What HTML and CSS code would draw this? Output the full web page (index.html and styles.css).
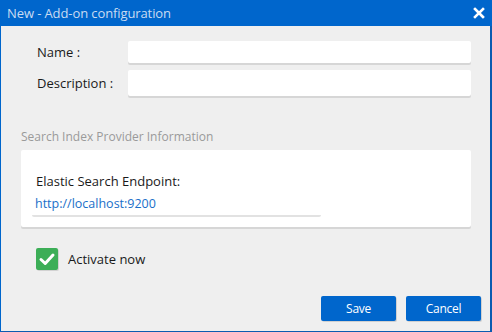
FILE: index.html
```html
<!DOCTYPE html>
<html>
<head>
<meta charset="utf-8">
<link rel="stylesheet" href="styles.css">
</head>
<body>
<div class="dialog">
  <div class="titlebar">
    <span class="title">New - Add-on configuration</span>
    <svg class="close" width="12" height="12" viewBox="0 0 12 12"><path d="M2 2 L10 10 M10 2 L2 10" stroke="#fff" stroke-width="2.6" stroke-linecap="square"/></svg>
  </div>
  <div class="content">
    <div class="form">
      <label class="lbl">Name :</label>
      <div class="field f-name"></div>
      <label class="lbl">Description :</label>
      <div class="field f-desc"></div>
    </div>
    <div class="section-title">Search Index Provider Information</div>
    <div class="card">
      <div class="card-label">Elastic Search Endpoint:</div>
      <div class="url-field">http://localhost:9200</div>
    </div>
    <div class="check-row">
      <span class="checkbox"><svg width="22" height="22" viewBox="0 0 22 22"><path d="M5 11.5 L9.2 15.5 L17 7" fill="none" stroke="#fff" stroke-width="3" stroke-linecap="round" stroke-linejoin="round"/></svg></span>
      <span class="check-label">Activate now</span>
    </div>
    <div class="buttons">
      <button class="btn">Save</button>
      <button class="btn">Cancel</button>
    </div>
  </div>
</div>
</body>
</html>
```

FILE: styles.css
```css
html, body {
  margin: 0;
  padding: 0;
}
body {
  font-family: "Open Sans", "Noto Sans", sans-serif;
  background: #efefef;
}
.dialog {
  width: 492px;
  height: 332px;
  box-sizing: border-box;
  display: flex;
  flex-direction: column;
  border-left: 1px solid #0066cc;
  border-right: 2px solid #0b5bb0;
  border-bottom: 1px solid #0b5bb0;
  background: #efefef;
}
.titlebar {
  height: 26px;
  margin-left: -1px;
  margin-right: -2px;
  background: #0066cc;
  display: flex;
  align-items: center;
  justify-content: space-between;
  padding: 0 7px 0 7px;
  flex-shrink: 0;
}
.title {
  color: #c9dcf2;
  font-size: 13px;
  letter-spacing: -0.1px;
}
.close {
  display: block;
}
.content {
  flex: 1;
  display: flex;
  flex-direction: column;
  padding: 15px 19px 0 20px;
}
.form {
  display: grid;
  grid-template-columns: 91px 1fr;
  row-gap: 7px;
  padding-left: 16px;
  align-items: center;
}
.lbl {
  font-size: 13px;
  color: #1a1a1a;
}
.field {
  background: #fff;
  border-radius: 2px;
  box-shadow: 0 2px 0 #d6d6d6;
}
.f-name { height: 22px; }
.f-desc { height: 26px; }
.section-title {
  margin-top: 32px;
  font-size: 12px;
  color: #9a9a9a;
  height: 17px;
  line-height: 17px;
}
.card {
  margin-top: 5px;
  height: 77px;
  box-sizing: border-box;
  background: #fff;
  border-radius: 2px;
  box-shadow: 0 2px 0 #d6d6d6;
  padding: 22px 0 0 11px;
}
.card-label {
  font-size: 13px;
  color: #1a1a1a;
  padding-left: 4px;
  line-height: 18px;
}
.url-field {
  margin-top: 5px;
  width: 289px;
  box-sizing: border-box;
  padding: 0 0 2px 3px;
  font-size: 12.5px;
  line-height: 18px;
  color: #1a6fc9;
  border-bottom: 2px solid #e2e2e2;
  border-radius: 0 0 2px 2px;
}
.check-row {
  margin-top: 21px;
  padding-left: 15px;
  display: flex;
  align-items: center;
  gap: 10px;
}
.checkbox {
  width: 22px;
  height: 22px;
  background: #3cae57;
  border-radius: 2px;
  box-shadow: 1px 1px 0 #d2d2d2;
  display: block;
}
.checkbox svg { display: block; }
.check-label {
  font-size: 13px;
  color: #1a1a1a;
}
.buttons {
  margin-top: 26px;
  display: flex;
  justify-content: flex-end;
  gap: 10px;
  margin-right: -10px;
}
.btn {
  width: 75px;
  height: 25px;
  background: #0066cc;
  color: #fff;
  border: none;
  border-radius: 2px;
  box-shadow: 1px 1px 0 #d0d0d0;
  font-family: "Open Sans", sans-serif;
  font-size: 12px;
  letter-spacing: -0.3px;
  padding: 0;
}
```
